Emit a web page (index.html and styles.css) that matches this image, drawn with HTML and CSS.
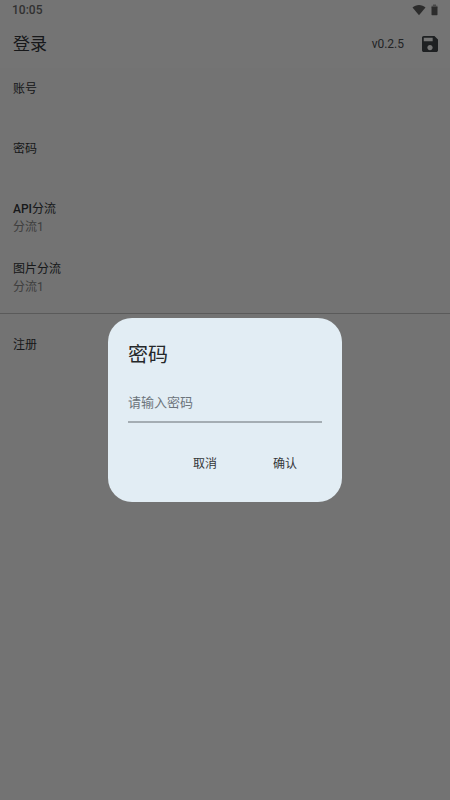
FILE: index.html
```html
<!DOCTYPE html>
<html lang="zh">
<head>
    <meta charset="UTF-8">
    <meta name="viewport" content="width=device-width, initial-scale=1.0">
    <title>登录</title>
    <link rel="stylesheet" href="styles.css">
</head>
<body>
    <!-- 状态栏 -->
    <div class="status-bar">
        <span class="status-time">10:05</span>
        <div class="status-icons">
            <svg class="wifi-icon" viewBox="0 0 14 12" aria-hidden="true">
                <path d="M7 11.2 0.5 3.4C2.2 1.8 4.5 0.9 7 0.9s4.8 0.9 6.5 2.5z"/>
            </svg>
            <svg class="battery-icon" viewBox="0 0 7 12" aria-hidden="true">
                <path class="battery-cap" d="M2 0.6h3v1.2h1.5v1.6h-6V1.8H2z"/>
                <path d="M0.5 3h6v7.6q0 0.6-0.6 0.6H1.1q-0.6 0-0.6-0.6z"/>
            </svg>
        </div>
    </div>

    <!-- 标题栏 -->
    <header class="app-bar">
        <h1>登录</h1>
        <span class="version">v0.2.5</span>
        <button class="save-button" type="button" aria-label="保存">
            <svg viewBox="3 3 18 18" aria-hidden="true">
                <path d="M17 3H5c-1.11 0-2 .9-2 2v14c0 1.1.89 2 2 2h14c1.1 0 2-.9 2-2V7l-4-4zm-5 16c-1.66 0-3-1.34-3-3s1.34-3 3-3 3 1.34 3 3-1.34 3-3 3zm3-10H5V5h10v4z"/>
            </svg>
        </button>
    </header>

    <!-- 设置列表 -->
    <main class="settings">
        <button class="item" type="button">
            <span class="item-title">账号</span>
        </button>
        <button class="item" type="button">
            <span class="item-title">密码</span>
        </button>
        <button class="item" type="button">
            <span class="item-title"><span class="latin">API</span>分流</span>
            <span class="item-value">分流1</span>
        </button>
        <button class="item" type="button">
            <span class="item-title">图片分流</span>
            <span class="item-value">分流1</span>
        </button>
        <hr class="divider">
        <button class="item" type="button">
            <span class="item-title">注册</span>
        </button>
    </main>

    <!-- 密码弹窗 -->
    <div class="overlay">
        <form class="dialog" role="dialog" aria-labelledby="dialogTitle">
            <h2 id="dialogTitle">密码</h2>
            <input class="dialog-input" type="password" placeholder="请输入密码" aria-labelledby="dialogTitle">
            <div class="dialog-actions">
                <button type="button">取消</button>
                <button type="button">确认</button>
            </div>
        </form>
    </div>
</body>
</html>
```
FILE: styles.css
```css
* {
    margin: 0;
    padding: 0;
    box-sizing: border-box;
}

body {
    min-height: 100vh;
    background-color: #fbfbfb;
    color: #333639;
    font-family: Roboto, "Noto Sans CJK SC", sans-serif;
    font-size: 12px;
    line-height: 18px;
}

button,
input {
    border: none;
    background: none;
    color: inherit;
    font: inherit;
}

button {
    cursor: pointer;
}

/* 状态栏 */
.status-bar {
    display: flex;
    justify-content: space-between;
    align-items: center;
    height: 20px;
    padding: 0 12px;
    background-color: #fdfdfd;
    color: #6c6c6c;
}

.status-time {
    font-weight: 500;
}

.status-icons {
    display: flex;
    align-items: center;
    gap: 5px;
    fill: #606060;
}

.status-icons svg {
    display: block;
    height: 12px;
}

.wifi-icon {
    width: 14px;
}

.battery-icon {
    width: 7px;
}

.battery-cap {
    fill: #a0a0a0;
}

/* 标题栏 */
.app-bar {
    display: flex;
    align-items: center;
    height: 48px;
    padding: 0 12px 0 13px;
    background-color: #fdfdfd;
}

.app-bar h1 {
    flex: 1;
    font-size: 17px;
    font-weight: 400;
}

.version {
    color: #4a4e51;
}

.save-button {
    width: 16px;
    height: 16px;
    margin-left: 18px;
}

.save-button svg {
    display: block;
    width: 16px;
    height: 16px;
    fill: #42474b;
}

/* 设置列表 */
.item {
    display: flex;
    flex-direction: column;
    align-items: flex-start;
    width: 100%;
    height: 60px;
    padding: 12px 13px;
    text-align: left;
}

.latin {
    font-weight: 500;
}

.item-value {
    color: #888888;
}

.divider {
    height: 1px;
    margin: 5px 0 10px;
    border: none;
    background-color: #c4c4c4;
}

/* 弹窗 */
.overlay {
    position: fixed;
    inset: 0;
    display: flex;
    justify-content: center;
    align-items: center;
    padding-top: 20px;
    background-color: rgba(0, 0, 0, 0.54);
}

.dialog {
    width: 52%;
    padding: 20px;
    border-radius: 24px;
    background-color: #e2edf4;
}

.dialog h2 {
    color: #25282a;
    font-size: 20px;
    font-weight: 400;
    line-height: 34px;
}

.dialog-input {
    display: block;
    width: 100%;
    height: 40px;
    margin-top: 11px;
    border-bottom: 2px solid #a4adb3;
    font-size: 13px;
    outline: none;
}

.dialog-input::placeholder {
    color: #6c747b;
    opacity: 1;
}

.dialog-actions {
    display: flex;
    justify-content: flex-end;
    gap: 32px;
    margin-top: 23px;
    padding-right: 13px;
}

.dialog-actions button {
    width: 48px;
    height: 36px;
}
```
